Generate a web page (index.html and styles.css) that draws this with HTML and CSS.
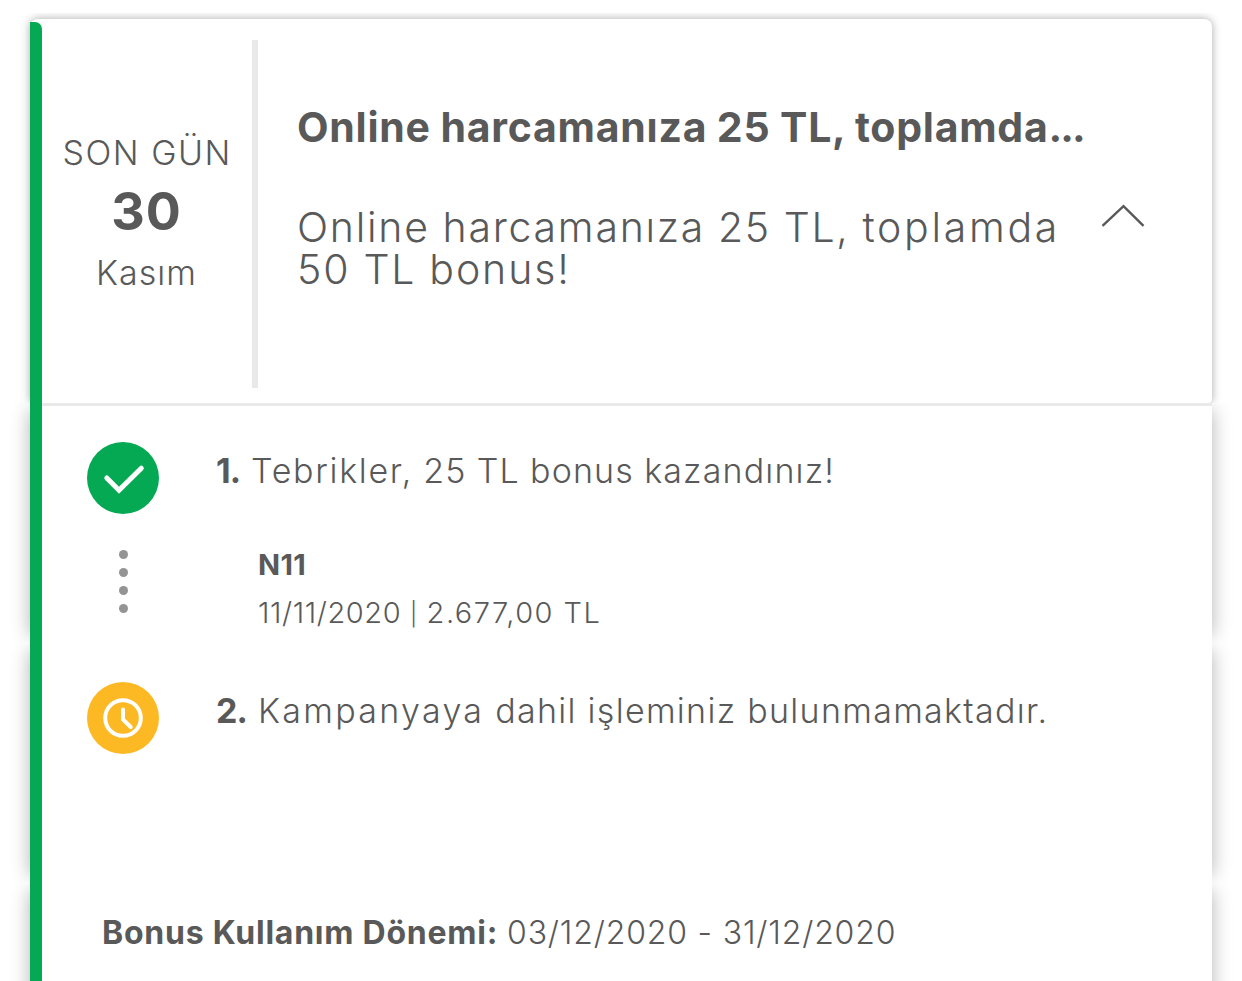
FILE: index.html
```html
<!DOCTYPE html>
<html lang="tr">
<head>
<meta charset="utf-8">
<title>Kampanya</title>
<link rel="stylesheet" href="styles.css">
</head>
<body>
<main class="campaign">
  <header class="summary">
    <div class="deadline">
      <span class="deadline-label">SON GÜN</span>
      <strong class="deadline-day">30</strong>
      <span class="deadline-month">Kasım</span>
    </div>
    <div class="headline">
      <h1 class="title">Online harcamanıza 25 TL, toplamda<span class="ellipsis">...</span></h1>
      <p class="subtitle">Online harcamanıza 25 TL, <span class="loose">toplamda</span><br><span class="amount">50 TL bonus!</span></p>
    </div>
    <svg class="chevron" viewBox="0 0 44 24"><path d="M1.5 21.8 22.5 2.2 42.5 21.8"/></svg>
  </header>
  <section class="step step-done">
    <div class="marker">
      <svg class="badge" viewBox="0 0 72 72"><circle class="green" cx="36" cy="36" r="36"/><path class="check" d="M19.8 36 32 48.2 54.3 26.2"/></svg>
      <div class="dots"><i></i><i></i><i></i><i></i></div>
    </div>
    <div class="detail">
      <p class="step-text won"><b>1.</b><span><span class="lead">Tebrikler,</span> 25 TL bonus kazandınız!</span></p>
      <div class="transaction">
        <p class="merchant">N11</p>
        <p class="purchase">11/11/2020 <span class="pipe">|</span> <span class="price">2.677,00 TL</span></p>
      </div>
    </div>
  </section>
  <section class="step">
    <div class="marker">
      <svg class="badge" viewBox="0 0 72 72"><circle class="amber" cx="36" cy="36" r="36"/><circle class="clock" cx="36" cy="36" r="17.8"/><path class="hands" d="M36 27.5V37.5L43.7 45"/></svg>
    </div>
    <div class="detail">
      <p class="step-text waiting"><b>2.</b><span><span class="lead">Kampanyaya</span> dahil işleminiz bulunmamaktadır.</span></p>
    </div>
  </section>
  <footer class="step period">
    <p><b>Bonus Kullanım Dönemi:</b><span>03/12/2020 - 31/12/2020</span></p>
  </footer>
</main>
</body>
</html>
```
FILE: styles.css
```css
* { box-sizing: border-box; margin: 0; padding: 0; }
body { background: #fff; color: #595959; font-family: Inter, "Liberation Sans", sans-serif; font-weight: 330; overflow: hidden; }
b { font-weight: 700; }
.campaign { display: flex; flex-direction: column; height: 981px; padding: 19px 30px 0; overflow: hidden; }

.summary { display: flex; flex: none; height: 384px; border-radius: 8px 8px 4px 4px; background: #fff; box-shadow: 0 0 10px rgba(0,0,0,.34); clip-path: inset(-6px -30px 0); }
.summary::before { content: ""; width: 12px; margin-top: 3px; background: #05a853; border-top-right-radius: 7px; }
.deadline { display: flex; flex-direction: column; align-items: center; width: 216px; height: 348px; margin-top: 21px; padding-top: 88px; border-right: 6px solid #e9e9e9; white-space: nowrap; }
.deadline-label { font-size: 34px; line-height: 50px; letter-spacing: 1.5px; margin-right: -.4px; }
.deadline-day { margin-top: 2px; font-size: 52px; line-height: 64px; font-weight: 700; letter-spacing: 1px; margin-right: 1px; }
.deadline-month { margin-top: 2px; font-size: 34px; line-height: 54px; letter-spacing: 1px; margin-right: 1px; }
.headline { width: 843px; padding: 83px 0 0 39px; white-space: nowrap; }
.title { font-size: 41px; line-height: 50px; font-weight: 700; letter-spacing: .75px; word-spacing: -.8px; }
.ellipsis { letter-spacing: -2px; }
.subtitle { margin-top: 54px; font-size: 41px; line-height: 42px; letter-spacing: 1.75px; word-spacing: -.5px; }
.loose { letter-spacing: 2.7px; }
.amount { letter-spacing: 1.9px; }
.chevron { width: 44px; height: 24px; margin-top: 185px; fill: none; stroke: #595959; stroke-width: 2.4; }

.step { position: relative; display: flex; flex: none; height: 240px; clip-path: inset(0 -30px); }
.step::before { content: ""; position: absolute; inset: 7px 0; z-index: -1; box-shadow: 0 0 18px rgba(0,0,0,.3); }
.step::after { content: ""; position: absolute; inset: 0; z-index: -1; background: #fff; border-left: 12px solid #05a853; }
.step-done::after { background: linear-gradient(#e9e9e9 3px, #fff 3px); }
.marker { width: 186px; padding: 39px 0 0 57px; }
.badge { display: block; width: 72px; height: 72px; }
.green { fill: #05a853; }
.amber { fill: #fdb924; }
.check, .clock, .hands { fill: none; stroke: #fff; stroke-width: 4; stroke-linecap: round; }
.check { stroke-width: 5; }
.dots { display: flex; flex-direction: column; gap: 9px; width: 9px; margin: 36px 0 0 32px; }
.dots i { width: 9px; height: 9px; border-radius: 50%; background: #949494; }
.detail { padding-top: 44px; white-space: nowrap; }
.step-text { display: flex; font-size: 34px; line-height: 48px; }
.step-text b { width: 35px; letter-spacing: -1px; }
.won span { letter-spacing: 1.15px; word-spacing: -.5px; }
.won .lead { letter-spacing: 1.7px; }
.waiting b { width: 42px; }
.waiting span { letter-spacing: 1.3px; }
.waiting .lead { letter-spacing: 2.3px; }
.transaction { padding: 46px 0 0 42px; font-size: 29px; line-height: 48px; }
.merchant { font-weight: 700; letter-spacing: .3px; }
.purchase { letter-spacing: .6px; }
.pipe { font-size: 23px; vertical-align: 1px; }
.price { letter-spacing: 1.5px; }
.period { padding: 26px 0 0 72px; font-size: 32px; line-height: 48px; white-space: nowrap; }
.period b { margin-right: 9px; letter-spacing: .75px; }
.period span { letter-spacing: .82px; }
```
